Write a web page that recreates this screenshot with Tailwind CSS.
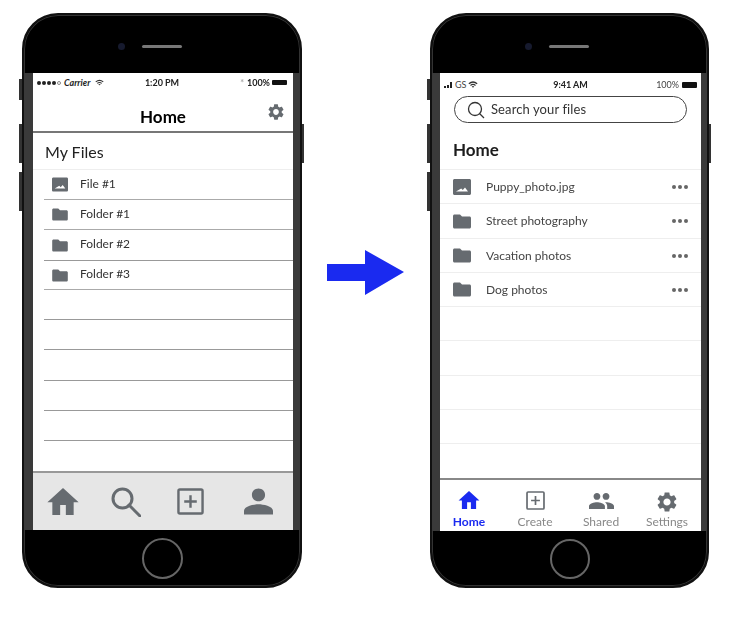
<!DOCTYPE html>
<html lang="en">
<head>
    <meta charset="UTF-8">
    <meta name="viewport" content="width=device-width, initial-scale=1.0">
    <title>Wireframe to mockup</title>
    <script src="https://cdn.jsdelivr.net/npm/@tailwindcss/browser@4"></script>
</head>
<body class="bg-white">

    <!-- Shared icons -->
    <svg class="hidden">
        <symbol id="i-home" viewBox="1 2 22 19"><path d="M10 21v-7h4v7h5.500v-9H23L12 2 1 12h3.500v9z"/></symbol>
        <symbol id="i-person" viewBox="1 2.400 22 19.600"><path d="M12 12c2.900 0 5-2.100 5-4.800S14.900 2.400 12 2.400 7 4.500 7 7.200 9.100 12 12 12zm0 2.200c-3.400 0-11 1.500-11 5V22h22v-2.800c0-3.500-7.600-5-11-5z"/></symbol>
        <symbol id="i-group" viewBox="1 5 22 14"><path d="M16 11c1.660 0 2.990-1.340 2.990-3S17.660 5 16 5c-1.660 0-3 1.340-3 3s1.340 3 3 3zm-8 0c1.660 0 2.990-1.340 2.990-3S9.660 5 8 5C6.340 5 5 6.340 5 8s1.340 3 3 3zm0 2c-2.330 0-7 1.170-7 3.500V19h14v-2.500c0-2.330-4.670-3.500-7-3.500zm8 0c-.29 0-.62.02-.97.05 1.160.84 1.970 1.970 1.970 3.450V19h6v-2.500c0-2.330-4.670-3.500-7-3.500z"/></symbol>
        <symbol id="i-gear" viewBox="2.500 2 19 20"><path d="M19.140 12.940c.04-.3.06-.61.06-.94 0-.32-.02-.64-.07-.94l2.030-1.580c.18-.14.23-.41.12-.61l-1.920-3.320c-.12-.22-.37-.29-.59-.22l-2.390.96c-.5-.38-1.030-.7-1.620-.94l-.36-2.540c-.04-.24-.24-.41-.48-.41h-3.840c-.24 0-.43.17-.47.41l-.36 2.540c-.59.24-1.130.57-1.620.94l-2.390-.96c-.22-.08-.47 0-.59.22L2.740 8.870c-.12.21-.08.47.12.61l2.030 1.580c-.05.3-.09.63-.09.94s.02.64.07.94l-2.030 1.580c-.18.14-.23.41-.12.61l1.920 3.320c.12.22.37.29.59.22l2.390-.96c.5.38 1.030.7 1.620.94l.36 2.540c.05.24.24.41.48.41h3.840c.24 0 .44-.17.47-.41l.36-2.540c.59-.24 1.130-.56 1.620-.94l2.390.96c.22.08.47 0 .59-.22l1.920-3.320c.12-.22.07-.47-.12-.61l-2.010-1.580zM12 15.600c-1.980 0-3.600-1.620-3.600-3.600s1.620-3.600 3.600-3.600 3.600 1.620 3.600 3.600-1.620 3.600-3.600 3.600z"/></symbol>
        <symbol id="i-folder" viewBox="0 0 18 15"><path d="M7 0.500H1.500C.7.500 0 1.200 0 2v11c0 .8.7 1.500 1.500 1.500h15c.8 0 1.500-.7 1.500-1.500V4c0-.8-.7-1.500-1.500-1.500H9z"/></symbol>
        <symbol id="i-image" viewBox="0 0 18 16"><path fill-rule="evenodd" d="M1.500 0h15c.8 0 1.500.7 1.500 1.500v13c0 .8-.7 1.500-1.500 1.500h-15C.7 16 0 15.300 0 14.500v-13C0 .7.7 0 1.500 0zM3 12.500h12L12 8.500l-2.200 2.500-1.600-1.500z"/></symbol>
        <symbol id="i-plusbox" viewBox="0 0 28 28"><rect x="1.500" y="1.500" width="25" height="25" rx="1.500" fill="none" stroke="currentColor" stroke-width="2.500"/><path d="M14 7.500v13M7.500 14h13" fill="none" stroke="currentColor" stroke-width="2.500"/></symbol>
    </svg>

    <div class="w-[733px] h-[617px] overflow-hidden flex items-start pt-[13px] pl-[22px] blur-[0.5px]">

        <!-- Left phone: wireframe -->
        <div class="relative w-[280px] h-[575px] shrink-0 rounded-[36px] bg-black border-2 border-[#111] shadow-[inset_0_0_0_1px_#333] flex flex-col items-center">
            <div class="absolute left-[-5px] top-[64px] w-[3px] h-[21px] bg-[#333]"></div>
            <div class="absolute left-[-5px] top-[109px] w-[3px] h-[39px] bg-[#333]"></div>
            <div class="absolute left-[-5px] top-[157px] w-[3px] h-[39px] bg-[#333]"></div>
            <div class="absolute right-[-4px] top-[109px] w-[2px] h-[39px] bg-[#333]"></div>

            <div class="h-[58px] w-full flex items-start gap-[17px] pl-[94px] pt-[28px]">
                <div class="w-[7px] h-[7px] rounded-full bg-[#161a2e]"></div>
                <div class="w-[40px] h-[3px] mt-[2px] rounded-full bg-[#777]"></div>
            </div>

            <div class="w-full flex-none h-[457px] bg-[#3a3a3a] pl-[9px] pr-[7px] flex">
                <div class="w-[260px] bg-white flex flex-col font-['Lato',sans-serif] text-[#222]">
                    <div class="h-[19px] flex items-center justify-between pl-[4px] pr-[6px] text-[9px] font-bold">
                        <div class="flex items-center gap-[3px] w-[90px]">
                            <span class="flex gap-[1px]">
                                <i class="w-[4px] h-[4px] rounded-full bg-[#222]"></i><i class="w-[4px] h-[4px] rounded-full bg-[#222]"></i><i class="w-[4px] h-[4px] rounded-full bg-[#222]"></i><i class="w-[4px] h-[4px] rounded-full bg-[#222]"></i><i class="w-[4px] h-[4px] rounded-full border border-[#888]"></i>
                            </span>
                            <span class="italic">Carrier</span>
                            <svg class="ml-[2px]" width="9" height="8" viewBox="0 0 24 18" fill="none" stroke="#333" stroke-width="3"><path d="M2 6c6-5 14-5 20 0M6 10c4-3 8-3 12 0M10 14c1-1 3-1 4 0"/></svg>
                        </div>
                        <span>1:20 PM</span>
                        <div class="flex items-center justify-end gap-[3px] w-[90px]">
                            <span class="text-[#aaa]">*</span><span class="mr-[-1px]">100%</span>
                            <div class="w-[15px] h-[5px] bg-[#111] rounded-[1px]"></div>
                        </div>
                    </div>
                    <div class="relative h-[41px] border-b-2 border-[#777] flex items-end justify-center pb-[2px]">
                        <span class="text-[17px] leading-[24px] font-bold text-black">Home</span>
                        <svg class="absolute right-[9px] top-[12px] fill-[#666b70]" width="16" height="16"><use href="#i-gear"/></svg>
                    </div>
                    <div class="h-[37px] border-b border-[#eee] flex items-center pl-[12px] pt-[1px] text-[16px] text-[#222]">My Files</div>

                    <div class="pl-[11px] flex flex-col text-[12px] text-[#333]">
                        <div class="h-[30px] border-b border-[#aaa] flex items-center">
                            <svg class="ml-[8px] fill-[#666b70]" width="16" height="15"><use href="#i-image"/></svg>
                            <span class="ml-[12px] pb-[2px]">File #1</span>
                        </div>
                        <div class="h-[30px] border-b border-[#aaa] flex items-center">
                            <svg class="ml-[8px] fill-[#666b70]" width="16" height="13"><use href="#i-folder"/></svg>
                            <span class="ml-[12px] pb-[2px]">Folder #1</span>
                        </div>
                        <div class="h-[31px] border-b border-[#999] flex items-center">
                            <svg class="ml-[8px] fill-[#666b70]" width="16" height="13"><use href="#i-folder"/></svg>
                            <span class="ml-[12px] pb-[3px]">Folder #2</span>
                        </div>
                        <div class="h-[29px] border-b border-[#aaa] flex items-center">
                            <svg class="ml-[8px] fill-[#666b70]" width="16" height="13"><use href="#i-folder"/></svg>
                            <span class="ml-[12px] pb-[3px]">Folder #3</span>
                        </div>
                        <div class="h-[30px] border-b border-[#999]"></div>
                        <div class="h-[30px] border-b border-[#999]"></div>
                        <div class="h-[31px] border-b border-[#999]"></div>
                        <div class="h-[30px] border-b border-[#999]"></div>
                        <div class="h-[30px] border-b border-[#999]"></div>
                        <div class="h-[30px]"></div>
                    </div>

                    <!-- Bottom toolbar -->
                    <div class="h-[59px] mt-auto bg-[#e6e6e6] border-t-2 border-[#999] flex items-center pl-[14px] text-[#666b70]">
                        <svg class="fill-current" width="32" height="27"><use href="#i-home"/></svg>
                        <svg class="ml-[32px]" width="30" height="30" viewBox="0 0 30 30" fill="none" stroke="currentColor" stroke-width="3"><circle cx="11.500" cy="11.500" r="9.500"/><path d="M18 18l11 11" stroke-linecap="round"/></svg>
                        <svg class="ml-[36px]" width="27" height="27"><use href="#i-plusbox"/></svg>
                        <svg class="ml-[40px] fill-current" width="29" height="27"><use href="#i-person"/></svg>
                    </div>
                </div>
            </div>

            <div class="flex-1 flex items-center justify-center">
                <div class="w-[41px] h-[41px] rounded-full border-2 border-[#666]"></div>
            </div>
        </div>

        <!-- Arrow -->
        <svg class="ml-[25px] mt-[237px] shrink-0 fill-[#1a2af0]" width="77" height="45" viewBox="0 0 77 45"><path d="M0 14h38V0l39 22L38 45V31H0z"/></svg>

        <!-- Right phone: mockup -->
        <div class="relative ml-[26px] w-[279px] h-[575px] shrink-0 rounded-[36px] bg-black border-2 border-[#111] shadow-[inset_0_0_0_1px_#333] flex flex-col items-center">
            <div class="absolute left-[-5px] top-[64px] w-[3px] h-[21px] bg-[#333]"></div>
            <div class="absolute left-[-5px] top-[109px] w-[3px] h-[39px] bg-[#333]"></div>
            <div class="absolute left-[-5px] top-[157px] w-[3px] h-[39px] bg-[#333]"></div>
            <div class="absolute right-[-4px] top-[109px] w-[2px] h-[39px] bg-[#333]"></div>

            <div class="h-[58px] w-full flex items-start gap-[17px] pl-[93px] pt-[28px]">
                <div class="w-[7px] h-[7px] rounded-full bg-[#161a2e]"></div>
                <div class="w-[40px] h-[3px] mt-[2px] rounded-full bg-[#777]"></div>
            </div>

            <div class="w-full flex-none h-[458px] bg-[#3a3a3a] pl-[8px] pr-[6px] flex">
                <div class="w-[261px] bg-white flex flex-col font-['Lato',sans-serif] text-[#222]">
                    <div class="h-[21px] flex items-center justify-between pl-[4px] pr-[4px] text-[9px] pt-[2px]">
                        <div class="flex items-center gap-[2px] w-[90px] text-[#444]">
                            <div class="flex items-end gap-[1px] h-[6px]">
                                <div class="w-[2px] h-[2px] bg-[#222]"></div>
                                <div class="w-[2px] h-[3px] bg-[#222]"></div>
                                <div class="w-[2px] h-[6px] bg-[#222]"></div>
                            </div>
                            <span class="ml-[1px]">GS</span>
                            <svg width="10" height="8" viewBox="0 0 24 18" fill="none" stroke="#333" stroke-width="3"><path d="M2 6c6-5 14-5 20 0M6 10c4-3 8-3 12 0M10 14c1-1 3-1 4 0"/></svg>
                        </div>
                        <span class="font-bold">9:41 AM</span>
                        <div class="flex items-center justify-end gap-[3px] w-[90px] text-[#444]">
                            <span>100%</span>
                            <div class="w-[15px] h-[6px] bg-[#111] rounded-[1px]"></div>
                        </div>
                    </div>
                    <div class="ml-[14px] mr-[14px] mt-[2px] h-[27px] rounded-full border border-[#444] flex items-center pl-[12px] gap-[6px] text-[13px] tracking-[0.1px] text-[#333]">
                        <svg width="18" height="18" viewBox="0 0 18 18" fill="none" stroke="#333" stroke-width="1.300"><circle cx="8" cy="8" r="6.500"/><path d="M12.500 12.500L17 17"/></svg>
                        <span>Search your files</span>
                    </div>
                    <div class="h-[47px] border-b border-[#eee] flex items-center pl-[13px] pt-[7px] text-[17px] font-bold text-[#1c1c1c]">Home</div>

                    <div class="flex flex-col text-[12px] text-[#444]">
                        <div class="h-[34px] border-b border-[#eee] flex items-center pl-[13px] pr-[13px]">
                            <svg class="fill-[#666b70] shrink-0" width="18" height="16"><use href="#i-image"/></svg>
                            <span class="ml-[15px]">Puppy_photo.jpg</span>
                            <span class="ml-auto flex gap-[2px]"><i class="w-[4px] h-[4px] rounded-full bg-[#666]"></i><i class="w-[4px] h-[4px] rounded-full bg-[#666]"></i><i class="w-[4px] h-[4px] rounded-full bg-[#666]"></i></span>
                        </div>
                        <div class="h-[35px] border-b border-[#eee] flex items-center pl-[13px] pr-[13px]">
                            <svg class="fill-[#666b70] shrink-0" width="18" height="15"><use href="#i-folder"/></svg>
                            <span class="ml-[15px]">Street photography</span>
                            <span class="ml-auto flex gap-[2px]"><i class="w-[4px] h-[4px] rounded-full bg-[#666]"></i><i class="w-[4px] h-[4px] rounded-full bg-[#666]"></i><i class="w-[4px] h-[4px] rounded-full bg-[#666]"></i></span>
                        </div>
                        <div class="h-[34px] border-b border-[#eee] flex items-center pl-[13px] pr-[13px]">
                            <svg class="fill-[#666b70] shrink-0" width="18" height="15"><use href="#i-folder"/></svg>
                            <span class="ml-[15px]">Vacation photos</span>
                            <span class="ml-auto flex gap-[2px]"><i class="w-[4px] h-[4px] rounded-full bg-[#666]"></i><i class="w-[4px] h-[4px] rounded-full bg-[#666]"></i><i class="w-[4px] h-[4px] rounded-full bg-[#666]"></i></span>
                        </div>
                        <div class="h-[34px] border-b border-[#eee] flex items-center pl-[13px] pr-[13px]">
                            <svg class="fill-[#666b70] shrink-0" width="18" height="15"><use href="#i-folder"/></svg>
                            <span class="ml-[15px]">Dog photos</span>
                            <span class="ml-auto flex gap-[2px]"><i class="w-[4px] h-[4px] rounded-full bg-[#666]"></i><i class="w-[4px] h-[4px] rounded-full bg-[#666]"></i><i class="w-[4px] h-[4px] rounded-full bg-[#666]"></i></span>
                        </div>
                        <div class="h-[34px] border-b border-[#eee]"></div>
                        <div class="h-[35px] border-b border-[#eee]"></div>
                        <div class="h-[34px] border-b border-[#eee]"></div>
                        <div class="h-[34px] border-b border-[#eee]"></div>
                    </div>

                    <!-- Tab bar -->
                    <div class="h-[53px] mt-auto border-t-2 border-[#888] flex justify-between pl-[4px] pr-[9px] text-[12px] leading-[12px] text-[#888]">
                        <div class="w-[50px] flex flex-col items-center pt-[11px] text-[#1a2af0] font-bold">
                            <svg class="fill-current" width="22" height="18"><use href="#i-home"/></svg>
                            <span class="mt-[7px]">Home</span>
                        </div>
                        <div class="w-[50px] flex flex-col items-center pt-[11px]">
                            <svg class="text-[#666b70]" width="19" height="19"><use href="#i-plusbox"/></svg>
                            <span class="mt-[6px]">Create</span>
                        </div>
                        <div class="w-[50px] flex flex-col items-center pt-[13px]">
                            <svg class="fill-[#666b70]" width="25" height="16"><use href="#i-group"/></svg>
                            <span class="mt-[7px]">Shared</span>
                        </div>
                        <div class="w-[50px] flex flex-col items-center pt-[12px]">
                            <svg class="fill-[#666b70]" width="20" height="20"><use href="#i-gear"/></svg>
                            <span class="mt-[4px] whitespace-nowrap">Settings</span>
                        </div>
                    </div>
                </div>
            </div>

            <div class="flex-1 flex items-center justify-center">
                <div class="w-[40px] h-[40px] rounded-full border-2 border-[#666]"></div>
            </div>
        </div>
    </div>

</body>
</html>
